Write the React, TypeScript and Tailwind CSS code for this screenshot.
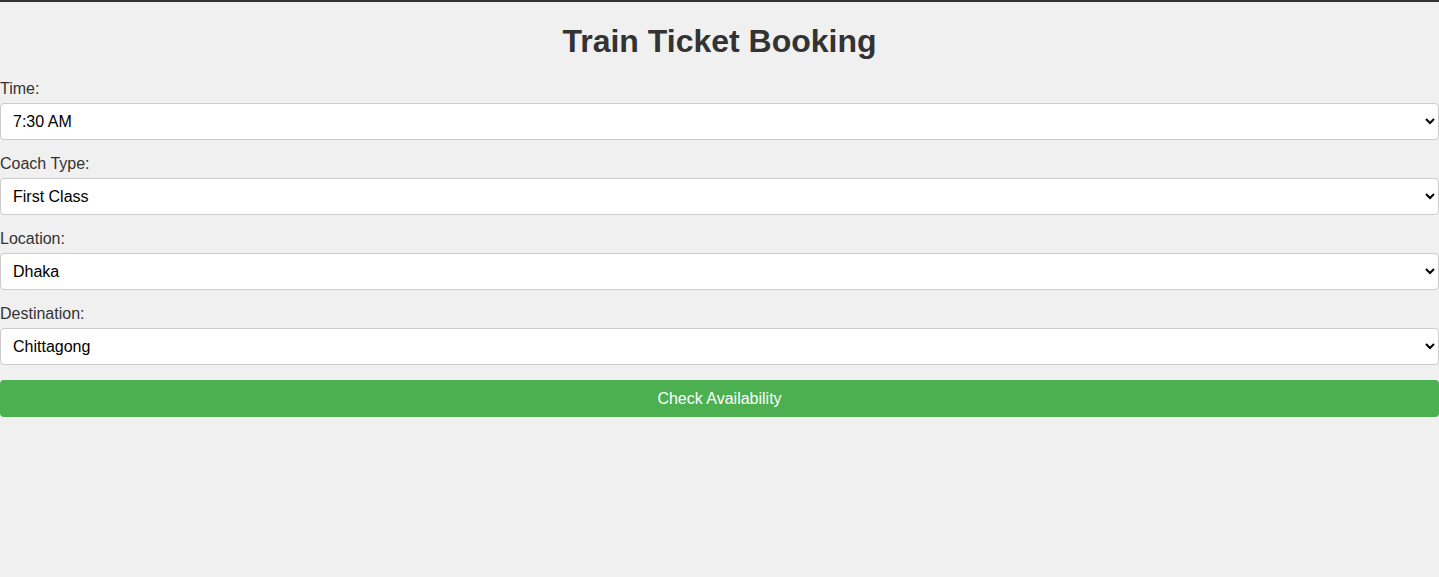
import React from "react";

type Field = {
    label: string;
    options: string[];
};

const fields: Field[] = [
    { label: "Time:", options: ["7:30 AM", "10:00 AM", "2:30 PM", "6:00 PM"] },
    { label: "Coach Type:", options: ["First Class", "Snigdha", "Shovan Chair", "AC Berth"] },
    { label: "Location:", options: ["Dhaka", "Chittagong", "Sylhet", "Rajshahi"] },
    { label: "Destination:", options: ["Chittagong", "Dhaka", "Sylhet", "Khulna"] },
];

const App: React.FC = () => {
    return (
        <div className="min-h-[577px] bg-[#f0f0f0] border-t-2 border-[#333] font-['Liberation_Sans',Arial,sans-serif] text-[#333]">
            <h1 className="text-[32px] leading-[37px] font-bold text-center mt-[21px] mb-[20px]">
                Train Ticket Booking
            </h1>
            <form onSubmit={(e) => e.preventDefault()}>
                {fields.map((field, index) => (
                    <div key={index}>
                        <label className="block text-base leading-[18px] mb-[5px]">{field.label}</label>
                        <select
                            defaultValue={field.options[0]}
                            className="block w-full h-[37px] mb-[15px] px-[8px] bg-white text-black text-base border border-[#ccc] rounded"
                        >
                            {field.options.map((opt) => (
                                <option key={opt}>{opt}</option>
                            ))}
                        </select>
                    </div>
                ))}
                <button
                    type="submit"
                    className="block w-full h-[37px] bg-[#4caf50] text-white text-base rounded"
                >
                    Check Availability
                </button>
            </form>
        </div>
    );
};

export default App;
